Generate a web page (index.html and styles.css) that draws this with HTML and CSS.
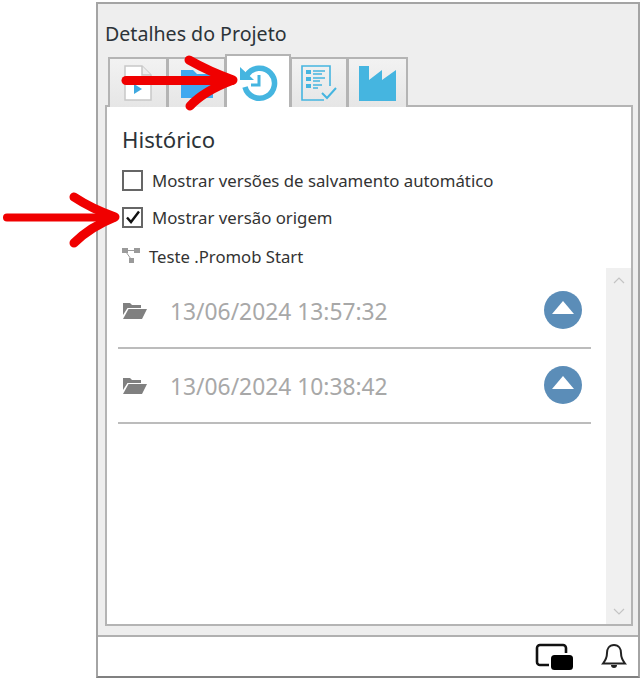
FILE: index.html
```html
<!DOCTYPE html>
<html lang="pt">
<head>
<meta charset="utf-8">
<title>Detalhes do Projeto</title>
<link rel="stylesheet" href="styles.css">
</head>
<body>
<div class="window">
  <div class="panel">
    <div class="title">Detalhes do Projeto</div>
    <div class="tabs">
      <div class="tab tab-1">
        <svg class="tab-icon" viewBox="0 0 30 36" width="30" height="36"><path d="M2 1h17l9 9v25H2z" fill="#fff" stroke="#c8c8c8" stroke-width="1.5"/><path d="M19 1v9h9" fill="#eee" stroke="#c8c8c8" stroke-width="1.5"/><path d="M11 19l8 5-8 5z" fill="#3fa9e0"/></svg>
      </div>
      <div class="tab tab-2">
        <svg class="tab-icon" viewBox="0 0 34 32" width="34" height="32"><path d="M1 3h12l4 4h16v24H1z" fill="#3fa9f0"/></svg>
      </div>
      <div class="tab tab-3 active">
        <svg class="tab-icon" viewBox="0 0 40 40" width="40" height="40"><path d="M9 12a15 15 0 1 1-2 12" fill="none" stroke="#45b5e0" stroke-width="5.5"/><path d="M2 4l14 13H2z" fill="#45b5e0"/><path d="M21 12v10h-8" fill="none" stroke="#45b5e0" stroke-width="3"/></svg>
      </div>
      <div class="tab tab-4">
        <svg class="tab-icon" viewBox="0 0 38 38" width="38" height="38"><path d="M30 22V2H2v34h22" fill="none" stroke="#45b5e0" stroke-width="1.6"/><g fill="#45b5e0"><rect x="6" y="6" width="5" height="4"/><rect x="6" y="13" width="5" height="4"/><rect x="6" y="20" width="5" height="4"/></g><g stroke="#45b5e0" stroke-width="1.6"><path d="M13 7h12M13 10h9M13 14h12M13 17h7M13 21h9M13 24h5"/></g><path d="M22 29l5 5 9-10" fill="none" stroke="#45b5e0" stroke-width="2"/></svg>
      </div>
      <div class="tab tab-5">
        <svg class="tab-icon" viewBox="0 0 37 35" width="37" height="35"><path d="M0 0h10v14l13-10v10l14-10v31H0z" fill="#45b5e0"/></svg>
      </div>
    </div>
    <div class="content">
      <div class="main">
        <h2 class="heading">Histórico</h2>
        <label class="check-row">
          <span class="box"></span>
          <span>Mostrar versões de salvamento automático</span>
        </label>
        <label class="check-row second">
          <span class="box">
            <svg viewBox="0 0 20 20" width="20" height="20"><path d="M4 10.5l4 4.5 8-10.5" fill="none" stroke="#111" stroke-width="2.4"/></svg>
          </span>
          <span>Mostrar versão origem</span>
        </label>
        <div class="project">
          <svg viewBox="0 0 18 16" width="18" height="16"><g fill="#9a9a9a"><rect x="0" y="0" width="6" height="5"/><rect x="12" y="0" width="6" height="5"/><rect x="7" y="10" width="5" height="5"/></g><path d="M5 2.5h8M4 4l5 7" stroke="#9a9a9a" stroke-width="1" fill="none"/></svg>
          <span>Teste .Promob Start</span>
        </div>
        <div class="versions">
          <div class="version">
            <svg class="folder" viewBox="0 0 25 17" width="25" height="17"><path d="M1 1h7l2 2h9v3H5.500L1 13zM6.500 7H25l-5 10H1z" fill="#808080"/></svg>
            <span class="date">13/06/2024 13:57:32</span>
            <span class="up"></span>
          </div>
          <div class="version">
            <svg class="folder" viewBox="0 0 25 17" width="25" height="17"><path d="M1 1h7l2 2h9v3H5.500L1 13zM6.500 7H25l-5 10H1z" fill="#808080"/></svg>
            <span class="date">13/06/2024 10:38:42</span>
            <span class="up"></span>
          </div>
        </div>
      </div>
      <div class="scrollbar">
        <svg viewBox="0 0 12 7" width="12" height="7"><path d="M1 6l5-5 5 5" fill="none" stroke="#c4c4c4" stroke-width="1.2"/></svg>
        <svg viewBox="0 0 12 7" width="12" height="7"><path d="M1 1l5 5 5-5" fill="none" stroke="#c4c4c4" stroke-width="1.2"/></svg>
      </div>
    </div>
  </div>
  <div class="footer">
    <svg viewBox="0 0 38 28" width="38" height="28"><path d="M14 22H5a3 3 0 0 1-3-3V5a3 3 0 0 1 3-3h23a3 3 0 0 1 3 3v5" fill="none" stroke="#111" stroke-width="2.6"/><rect x="16" y="12" width="22" height="15" rx="3.500" fill="#000"/></svg>
    <svg viewBox="0 0 26 27" width="26" height="27"><path d="M13 2c-5 0-7 4-7 8 0 5-2 8-4 10.500h22c-2-2.500-4-5.500-4-10.500 0-4-2-8-7-8z" fill="none" stroke="#222" stroke-width="2"/><path d="M10 22a3 3 0 0 0 6 0z" fill="#222"/></svg>
  </div>
</div>
<svg class="arrows" viewBox="0 0 644 679" width="644" height="679">
  <g fill="none" stroke="#f00000" stroke-linecap="round" stroke-linejoin="round">
    <path d="M126 80.500H232" stroke-width="9"/>
    <path d="M189 60c14 8 30 15 44 20-16 6-32 14-43 26" stroke-width="9"/>
    <path d="M7 217.500H114" stroke-width="8"/>
    <path d="M74 197c12 8 27 15 41 20-15 6-29 14-41 26" stroke-width="9"/>
  </g>
</svg>
</body>
</html>
```

FILE: styles.css
```css
html, body {
  margin: 0;
  padding: 0;
  background: #fff;
}

body {
  width: 644px;
  height: 679px;
  overflow: hidden;
  position: relative;
  font-family: "Noto Sans", "Open Sans", sans-serif;
  color: #333;
}

.window {
  box-sizing: border-box;
  width: 544px;
  height: 676px;
  margin: 2px 0 0 96px;
  border: 2px solid #a4a4a4;
  border-bottom-color: #808080;
  display: flex;
  flex-direction: column;
}

.panel {
  flex: 1;
  min-height: 0;
  background: #eeeeee;
  display: flex;
  flex-direction: column;
  padding: 0 5px 9px 7px;
  border-bottom: 2px solid #b0b0b0;
}

.title {
  font-size: 19.6px;
  line-height: 24px;
  margin-top: 18px;
  color: #2c3338;
}

.tabs {
  display: flex;
  align-items: flex-end;
  height: 61px;
  margin-left: 3px;
  position: relative;
  z-index: 1;
  margin-bottom: -2px;
}

.tab {
  box-sizing: border-box;
  height: 50px;
  border: 2px solid #b4b4b4;
  border-bottom: 0;
  margin-right: -1px;
  background: linear-gradient(#f2f2f2, #e6e6e6);
  display: flex;
  align-items: center;
  justify-content: center;
}

.tab-1 { width: 60px; }
.tab-2 { width: 59px; }
.tab-3 { width: 66px; }
.tab-4 { width: 58px; }
.tab-5 { width: 61px; }

.tab.active {
  height: 53px;
  background: #fff;
  position: relative;
  z-index: 2;
  padding-top: 2px;
}

.tab-icon {
  display: block;
}

.content {
  flex: 1;
  min-height: 0;
  background: #fff;
  border: 2px solid #b4b4b4;
  display: flex;
}

.main {
  flex: 1;
  min-width: 0;
  padding: 0 14px 0 15px;
}

.heading {
  margin: 18px 0 0 0;
  font-size: 22.2px;
  line-height: 30px;
  font-weight: 400;
  color: #2c3338;
}

.check-row {
  display: flex;
  align-items: center;
  gap: 9px;
  height: 24px;
  margin-top: 13px;
  font-size: 16.8px;
  color: #333;
}

.check-row.second {
  margin-top: 13px;
}

.box {
  box-sizing: border-box;
  width: 21px;
  height: 21px;
  border: 2px solid #666;
  background: #fff;
  display: block;
  flex: none;
}

.box svg {
  display: block;
  margin: -1.500px;
}

.project {
  display: flex;
  align-items: center;
  gap: 9px;
  height: 24px;
  margin-top: 15px;
  font-size: 16.7px;
}

.versions {
  margin-top: 6px;
  margin-left: -4px;
  width: 473px;
}

.version {
  box-sizing: border-box;
  height: 75px;
  border-bottom: 2px solid #bcbcbc;
  display: flex;
  align-items: center;
  padding: 0 9px 2px 4px;
}

.folder {
  flex: none;
  margin-top: 2px;
}

.date {
  margin-left: 23px;
  margin-top: 3px;
  font-size: 22.8px;
  color: #a8a8a8;
  flex: 1;
}

.up {
  width: 38px;
  height: 38px;
  border-radius: 50%;
  background: #5b8db8;
  position: relative;
  flex: none;
}

.up::after {
  content: "";
  position: absolute;
  left: 8px;
  top: 10px;
  width: 0;
  height: 0;
  border-left: 11px solid transparent;
  border-right: 11px solid transparent;
  border-bottom: 13px solid #fff;
}

.scrollbar {
  width: 25px;
  flex: none;
  align-self: stretch;
  margin-top: 161px;
  background: #f0f0f0;
  display: flex;
  flex-direction: column;
  justify-content: space-between;
  align-items: center;
  padding: 9px 0 9px;
  box-sizing: border-box;
}

.scrollbar svg {
  display: block;
}

.footer {
  height: 39px;
  flex: none;
  background: #fff;
  display: flex;
  align-items: center;
  justify-content: flex-end;
  gap: 28px;
  padding-right: 11px;
}

.arrows {
  position: absolute;
  left: 0;
  top: 0;
  z-index: 5;
  pointer-events: none;
}
```
